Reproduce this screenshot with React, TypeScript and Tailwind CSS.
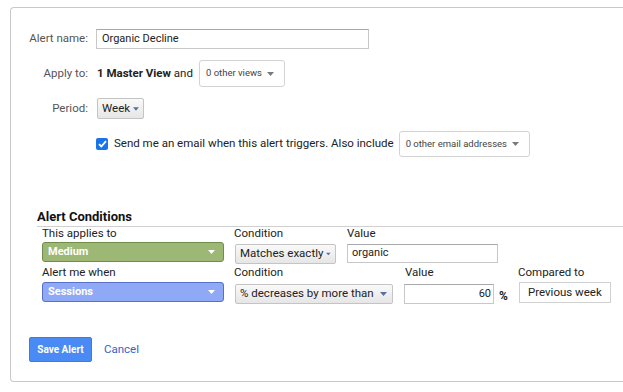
import React from 'react';

const Caret = ({ className }: { className: string }) => (
  <svg className={className} width="7" height="4" viewBox="0 0 7 4">
    <path d="M0 0h7L3.5 4z" fill="currentColor" />
  </svg>
);

const GrayButton = ({ label, className }: { label: string; className: string }) => (
  <div
    className={`flex items-center justify-between gap-[3px] whitespace-nowrap rounded-[2px] border border-[#c4c4c4] bg-gradient-to-b from-[#f9f9f9] to-[#e6e6e6] pl-[4px] text-[11.5px] text-[#222] ${className}`}
  >
    <span>{label}</span>
    <Caret className="text-[#5a6f9c]" />
  </div>
);

const SmallDropdown = ({ label, className }: { label: string; className: string }) => (
  <div
    className={`flex items-center justify-between whitespace-nowrap rounded-[3px] border border-[#d3d3d3] bg-white pl-[6px] pr-[10px] text-[9.5px] text-[#444] ${className}`}
  >
    <span>{label}</span>
    <Caret className="text-[#7a7a7a]" />
  </div>
);

const ColorDropdown = ({ label, tone }: { label: string; tone: 'green' | 'blue' }) => (
  <div
    className={`flex h-[20px] w-[182px] items-center justify-between rounded-[3px] border pl-[5px] pr-[8px] text-[11px] font-bold text-white ${
      tone === 'green' ? 'border-[#6f8d4b] bg-[#9cb874]' : 'border-[#5870c6] bg-[#8fa9f6]'
    }`}
  >
    <span>{label}</span>
    <Caret className="text-white" />
  </div>
);

export default function App() {
  return (
    <div
      className="h-[392px] w-[623px] overflow-hidden whitespace-nowrap bg-white pl-[10px] pt-[7px] text-[#222]"
      style={{ fontFamily: 'Roboto, "Liberation Sans", Arial, sans-serif' }}
    >
      <div className="flex h-[375px] flex-col rounded-l-[4px] border border-r-0 border-[#c9c9c9]">
        {/* Alert name */}
        <div className="mt-[21px] flex h-[20px] items-center">
          <div className="w-[77px] text-right text-[11.5px] text-[#555]">Alert name:</div>
          <div className="ml-[8px] flex h-[20px] w-[273px] items-center border border-[#c8c8c8] border-t-[#a8a8a8] pl-[5px] text-[11px] text-[#222]">
            Organic Decline
          </div>
        </div>

        {/* Apply to */}
        <div className="mt-[11px] flex h-[27px] items-center">
          <div className="w-[77px] text-right text-[11.5px] text-[#555]">Apply to:</div>
          <div className="ml-[9px] text-[11.5px]">
            <span className="font-bold">1 Master View</span> and
          </div>
          <SmallDropdown label="0 other views" className="ml-[6px] h-[27px] w-[86px]" />
        </div>

        {/* Period */}
        <div className="mt-[11px] flex h-[21px] items-center">
          <div className="w-[77px] text-right text-[11.5px] text-[#555]">Period:</div>
          <GrayButton label="Week" className="ml-[9px] h-[21px] w-[47px] pr-[4px]" />
        </div>

        {/* Email */}
        <div className="mt-[12px] flex h-[26px] items-center pl-[85px]">
          <div className="flex h-[12px] w-[12px] items-center justify-center rounded-[2px] bg-[#1a73e8]">
            <svg width="9" height="8" viewBox="0 0 9 8">
              <path d="M1 4.2l2.3 2.3L8 1.2" stroke="white" strokeWidth="1.8" fill="none" />
            </svg>
          </div>
          <span className="ml-[6px] text-[11.5px]">Send me an email when this alert triggers. Also include</span>
          <SmallDropdown label="0 other email addresses" className="ml-[5px] h-[26px] w-[131px]" />
        </div>

        {/* Alert Conditions */}
        <div className="ml-[26px] mt-[50px] flex h-[20px] items-end border-b border-[#d0d0d0] pb-[3px]">
          <span className="text-[13px] font-bold leading-none text-[#111]">Alert Conditions</span>
        </div>

        <div className="ml-[31px] flex h-[14px] items-center text-[11.5px] leading-none">
          <div className="w-[192px]">This applies to</div>
          <div className="w-[113px]">Condition</div>
          <div>Value</div>
        </div>
        <div className="ml-[31px] mt-[1px] flex h-[22px] items-start">
          <ColorDropdown label="Medium" tone="green" />
          <GrayButton label="Matches exactly" className="ml-[11px] mt-[2px] h-[20px] w-[101px] pr-[4px]" />
          <div className="ml-[11px] mt-[2px] flex h-[19px] w-[151px] items-center border border-[#c8c8c8] border-t-[#a8a8a8] pl-[4px] text-[11px]">
            organic
          </div>
        </div>

        <div className="ml-[31px] flex h-[17px] items-center text-[11.5px] leading-none">
          <div className="w-[192px]">Alert me when</div>
          <div className="w-[171px]">Condition</div>
          <div className="w-[113px]">Value</div>
          <div>Compared to</div>
        </div>
        <div className="ml-[31px] mt-[1px] flex h-[22px] items-start">
          <ColorDropdown label="Sessions" tone="blue" />
          <GrayButton label="% decreases by more than" className="ml-[11px] mt-[2px] h-[20px] w-[158px] pr-[5px]" />
          <div className="ml-[11px] mt-[2px] flex h-[20px] w-[90px] items-center justify-end border border-[#c8c8c8] border-t-[#a8a8a8] pr-[2px] text-[11px]">
            60
          </div>
          <span className="ml-[5px] mt-[5px] text-[12px] font-bold">%</span>
          <div className="ml-[11px] flex h-[21px] w-[92px] items-center justify-center border border-[#d0d0d0] text-[11.5px]">
            Previous week
          </div>
        </div>

        {/* Actions */}
        <div className="ml-[18px] mt-[33px] flex items-center">
          <div className="flex h-[25px] w-[63px] items-center justify-center rounded-[2px] border border-[#3b7be8] bg-[#4a8af4] text-[10px] font-bold text-white">
            Save Alert
          </div>
          <span className="ml-[12px] text-[11.5px] text-[#2f66c9]">Cancel</span>
        </div>
      </div>
    </div>
  );
}
